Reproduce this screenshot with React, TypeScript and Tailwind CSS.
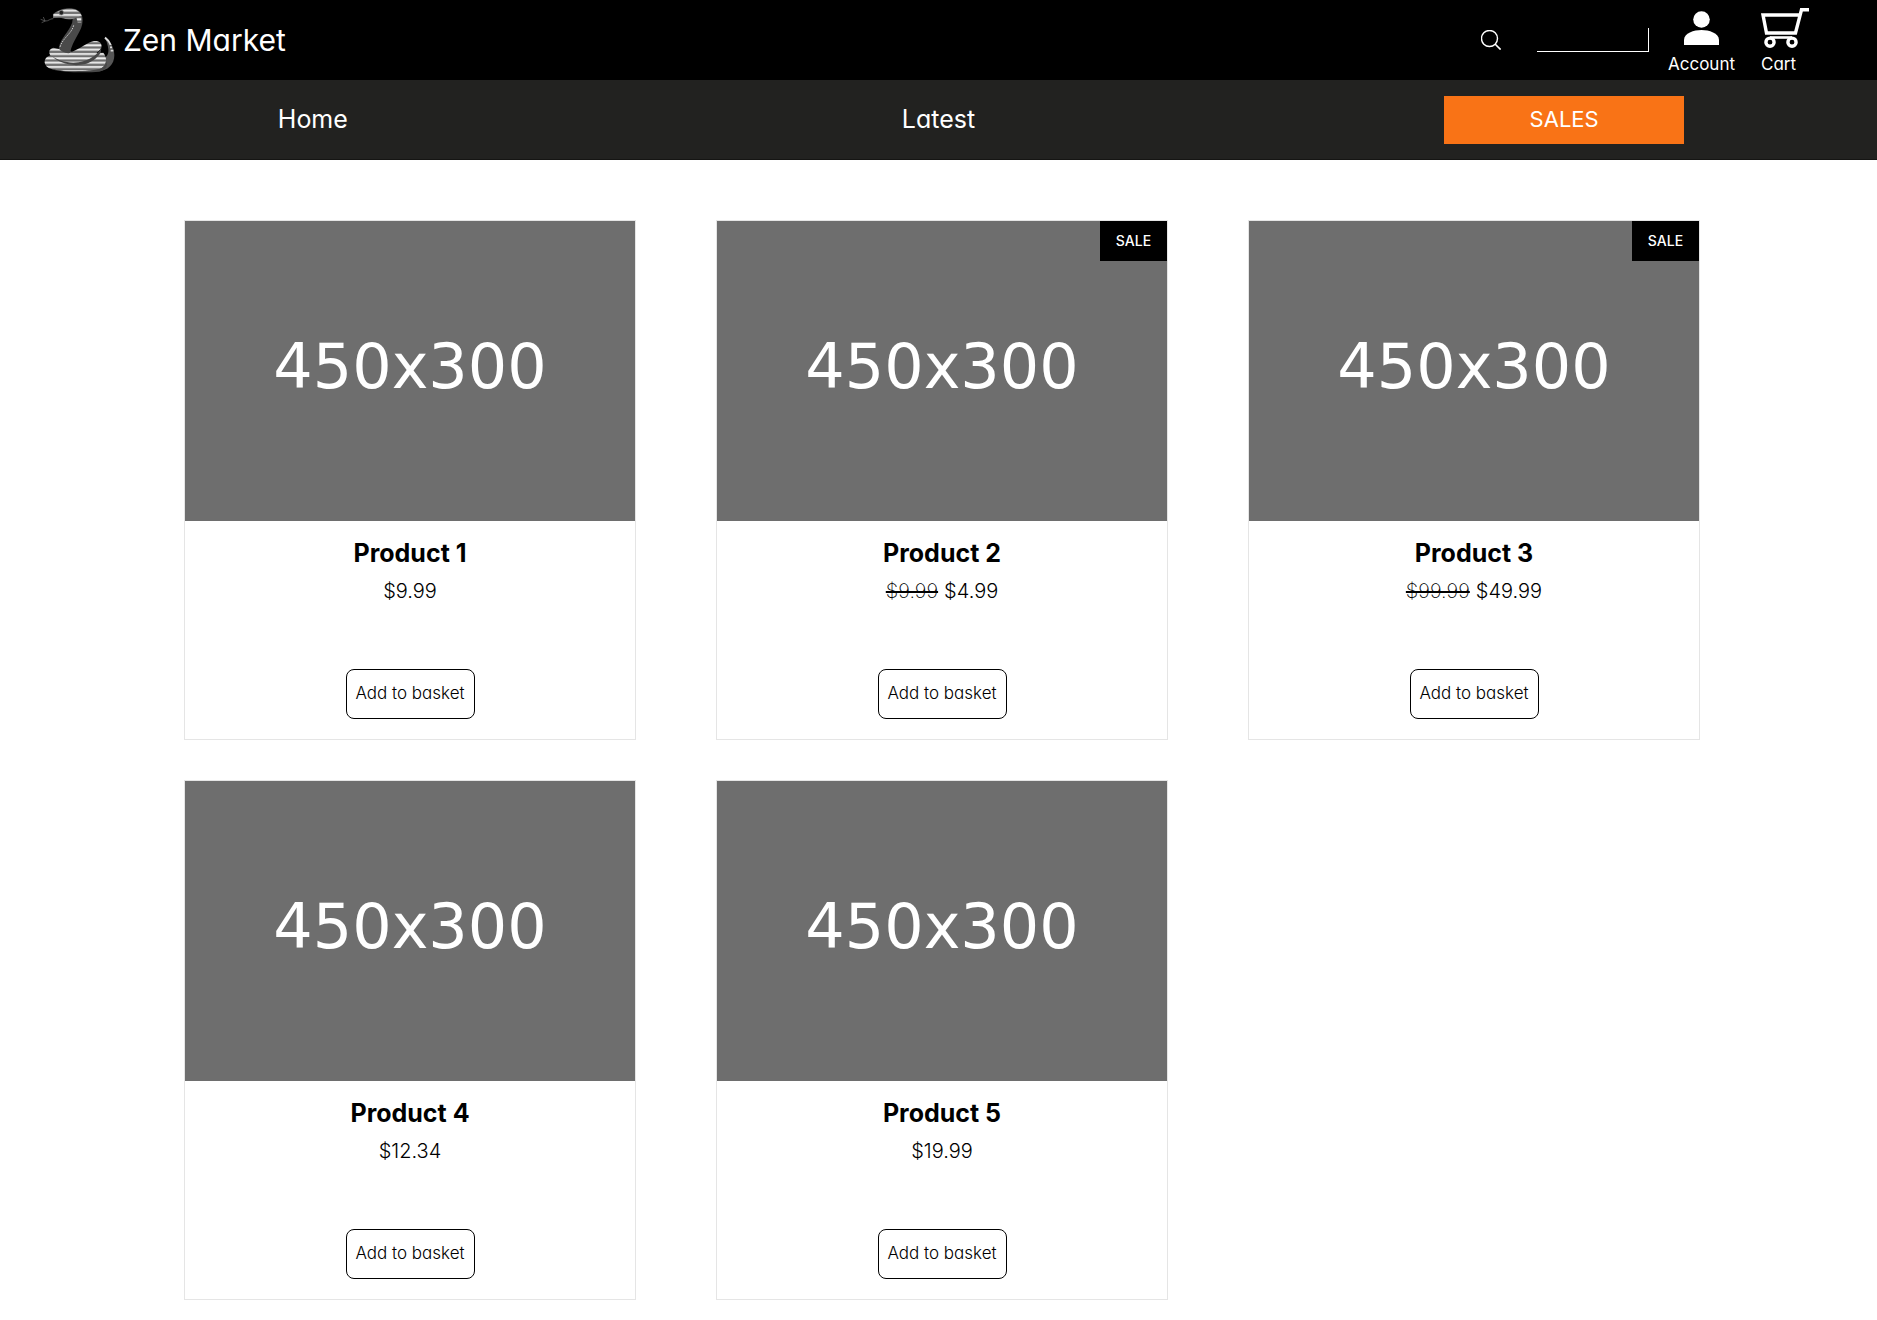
type Product = { name: string; price: string; oldPrice?: string };

const products: Product[] = [
  { name: "Product 1", price: "$9.99" },
  { name: "Product 2", price: "$4.99", oldPrice: "$9.99" },
  { name: "Product 3", price: "$49.99", oldPrice: "$99.99" },
  { name: "Product 4", price: "$12.34" },
  { name: "Product 5", price: "$19.99" },
];

function SnakeLogo() {
  return (
    <svg viewBox="30 15 231 210" className="h-[70px] w-[77px]" aria-hidden="true">
      <defs>
        <pattern id="stripes" width="20" height="13" patternUnits="userSpaceOnUse">
          <rect width="20" height="13" fill="#6e6e6e" />
          <rect y="3" width="20" height="6" fill="#ededed" />
        </pattern>
      </defs>
      <path d="M224 110c16 12 29 32 29 56 0 28-20 47-48 47h-30l34-30c20-8 28-20 26-36-1-10-5-24-11-37z" fill="#565656" />
      <path d="M225 113c7 5 13 12 17 22" fill="none" stroke="#dcdcdc" strokeWidth="6" />
      <path d="M240 142l6 0M242 152l8 0" fill="none" stroke="#dcdcdc" strokeWidth="5" />
      <path d="M62 166c-22 6-24 28-6 38 26 12 110 14 150 4 24-8 28-34 14-50z" fill="url(#stripes)" />
      <path d="M62 206c34 10 106 10 144 2 14-4 22-14 22-24 8 14-2 28-20 31-40 4-118 3-146-9z" fill="#484848" />
      <path d="M70 143c-16 4-16 20-2 28 26 16 66 20 100 6 20-9 38-20 46-34 4-14-8-22-22-20-20 4-42 24-66 32z" fill="url(#stripes)" />
      <path d="M62 166c26 20 66 28 100 17 24-8 42-22 52-40l-2 15c-12 18-30 30-50 35-38 8-78-5-100-27z" fill="#484848" />
      <path d="M68 43c10-9 28-18 50-18 26 0 40 12 40 36 0 34-30 56-38 98-12 2-28-4-34-14 6-36 42-58 42-88-10 3-22 1-32-2z" fill="#4a4a4a" />
      <path d="M70 43c12-9 28-17 48-17 20 0 32 8 37 22l-22 7c-14 2-28 0-38-2l-26 1z" fill="url(#stripes)" />
      <path d="M139 50h15v18h-11z" fill="url(#stripes)" />
      <path d="M131 76c-6 26-34 38-41 66" fill="none" stroke="#c8c8c8" strokeWidth="3" strokeDasharray="5 3" />
      <circle cx="94" cy="38" r="7" fill="#222" stroke="#888" strokeWidth="2" />
      <path d="M70 56c-12 0-14 8-24 7l-14-5m14 5-11 5M40 51l5 12" fill="none" stroke="#707070" strokeWidth="2" />
    </svg>
  );
}

function SearchIcon() {
  return (
    <svg viewBox="0 0 20 20" className="size-5" fill="none" stroke="#fff" aria-hidden="true">
      <circle cx="8.5" cy="8.5" r="8" strokeWidth="1.4" />
      <path d="m14 14 5.6 5.6" strokeWidth="1.6" />
    </svg>
  );
}

function AccountIcon() {
  return (
    <svg viewBox="0 0 35 34" className="h-[34px] w-[35px]" fill="#fff" aria-hidden="true">
      <circle cx="17.5" cy="8.5" r="8.3" />
      <path d="M0 34V29C0 22 10 19 17.500 19S35 22 35 29V34Z" />
    </svg>
  );
}

function CartIcon() {
  return (
    <svg viewBox="0 0 48 40" className="h-10 w-12" fill="none" stroke="#fff" aria-hidden="true">
      <path d="M48 1.800H40.500L34.500 25H5.500L2 7H38" strokeWidth="3.400" />
      <path d="M9 29.500H31" strokeWidth="2.600" />
      <circle cx="9" cy="34.200" r="4.100" strokeWidth="3.400" />
      <circle cx="31" cy="34.200" r="4.100" strokeWidth="3.400" />
    </svg>
  );
}

function Header() {
  return (
    <header className="text-white">
      <div className="flex h-20 items-center justify-between bg-black pl-10 pr-17">
        <a href="#" className="flex items-center gap-1.5">
          <SnakeLogo />
          <span className="text-[30px] leading-10">Zen Market</span>
        </a>
        <div className="flex items-center">
          <button type="button" aria-label="Search" className="mr-9">
            <SearchIcon />
          </button>
          <input
            type="text"
            aria-label="Search products"
            className="mr-[19px] h-6 w-28 border-r border-b border-white bg-black px-1 text-sm text-white outline-none"
          />
          <a href="#" className="flex h-20 flex-col items-center justify-between pt-[11px] pb-1">
            <AccountIcon />
            <span className="text-[17px] leading-6">Account</span>
          </a>
          <a href="#" className="ml-[26px] flex h-20 flex-col items-start justify-between pt-2 pb-1">
            <CartIcon />
            <span className="text-[17px] leading-6">Cart</span>
          </a>
        </div>
      </div>
      <nav className="grid h-20 grid-cols-3 place-items-center border-b border-[#151513] bg-[#222220] text-[25px]">
        <a href="#">Home</a>
        <a href="#">Latest</a>
        <a href="#" className="flex h-12 w-60 items-center justify-center bg-[#f97316] text-[22px]">
          SALES
        </a>
      </nav>
    </header>
  );
}

function ProductCard({ name, price, oldPrice }: Product) {
  return (
    <article className="relative flex h-[520px] flex-col items-center border border-[#e5e5e5] pb-5 text-black">
      <div
        role="img"
        aria-label={name}
        className="flex h-[300px] w-full items-center justify-center bg-[#6e6e6e] pb-2 font-['DejaVu_Sans',sans-serif] text-[62px] leading-none text-white"
      >
        450x300
      </div>
      {oldPrice && (
        <span className="absolute top-0 right-0 flex h-10 w-[67px] items-center justify-center bg-black text-sm font-medium text-white">
          SALE
        </span>
      )}
      <h2 className="mt-4 text-[25px] leading-8 font-bold">{name}</h2>
      <p className="mt-2 text-xl leading-7 font-light">
        {oldPrice && <s className="mr-1.5 font-extralight decoration-2">{oldPrice}</s>}
        {price}
      </p>
      <button type="button" className="mt-auto h-[50px] w-[129px] rounded-lg border border-black text-[17px] font-light">
        Add to basket
      </button>
    </article>
  );
}

export default function App() {
  return (
    <div className="min-h-screen bg-white font-['Inter',sans-serif] [font-feature-settings:'cv11']">
      <Header />
      <main className="grid grid-cols-[repeat(auto-fill,452px)] justify-center gap-x-20 gap-y-10 py-[60px] pl-[7px]">
        {products.map((p) => (
          <ProductCard key={p.name} {...p} />
        ))}
      </main>
    </div>
  );
}
